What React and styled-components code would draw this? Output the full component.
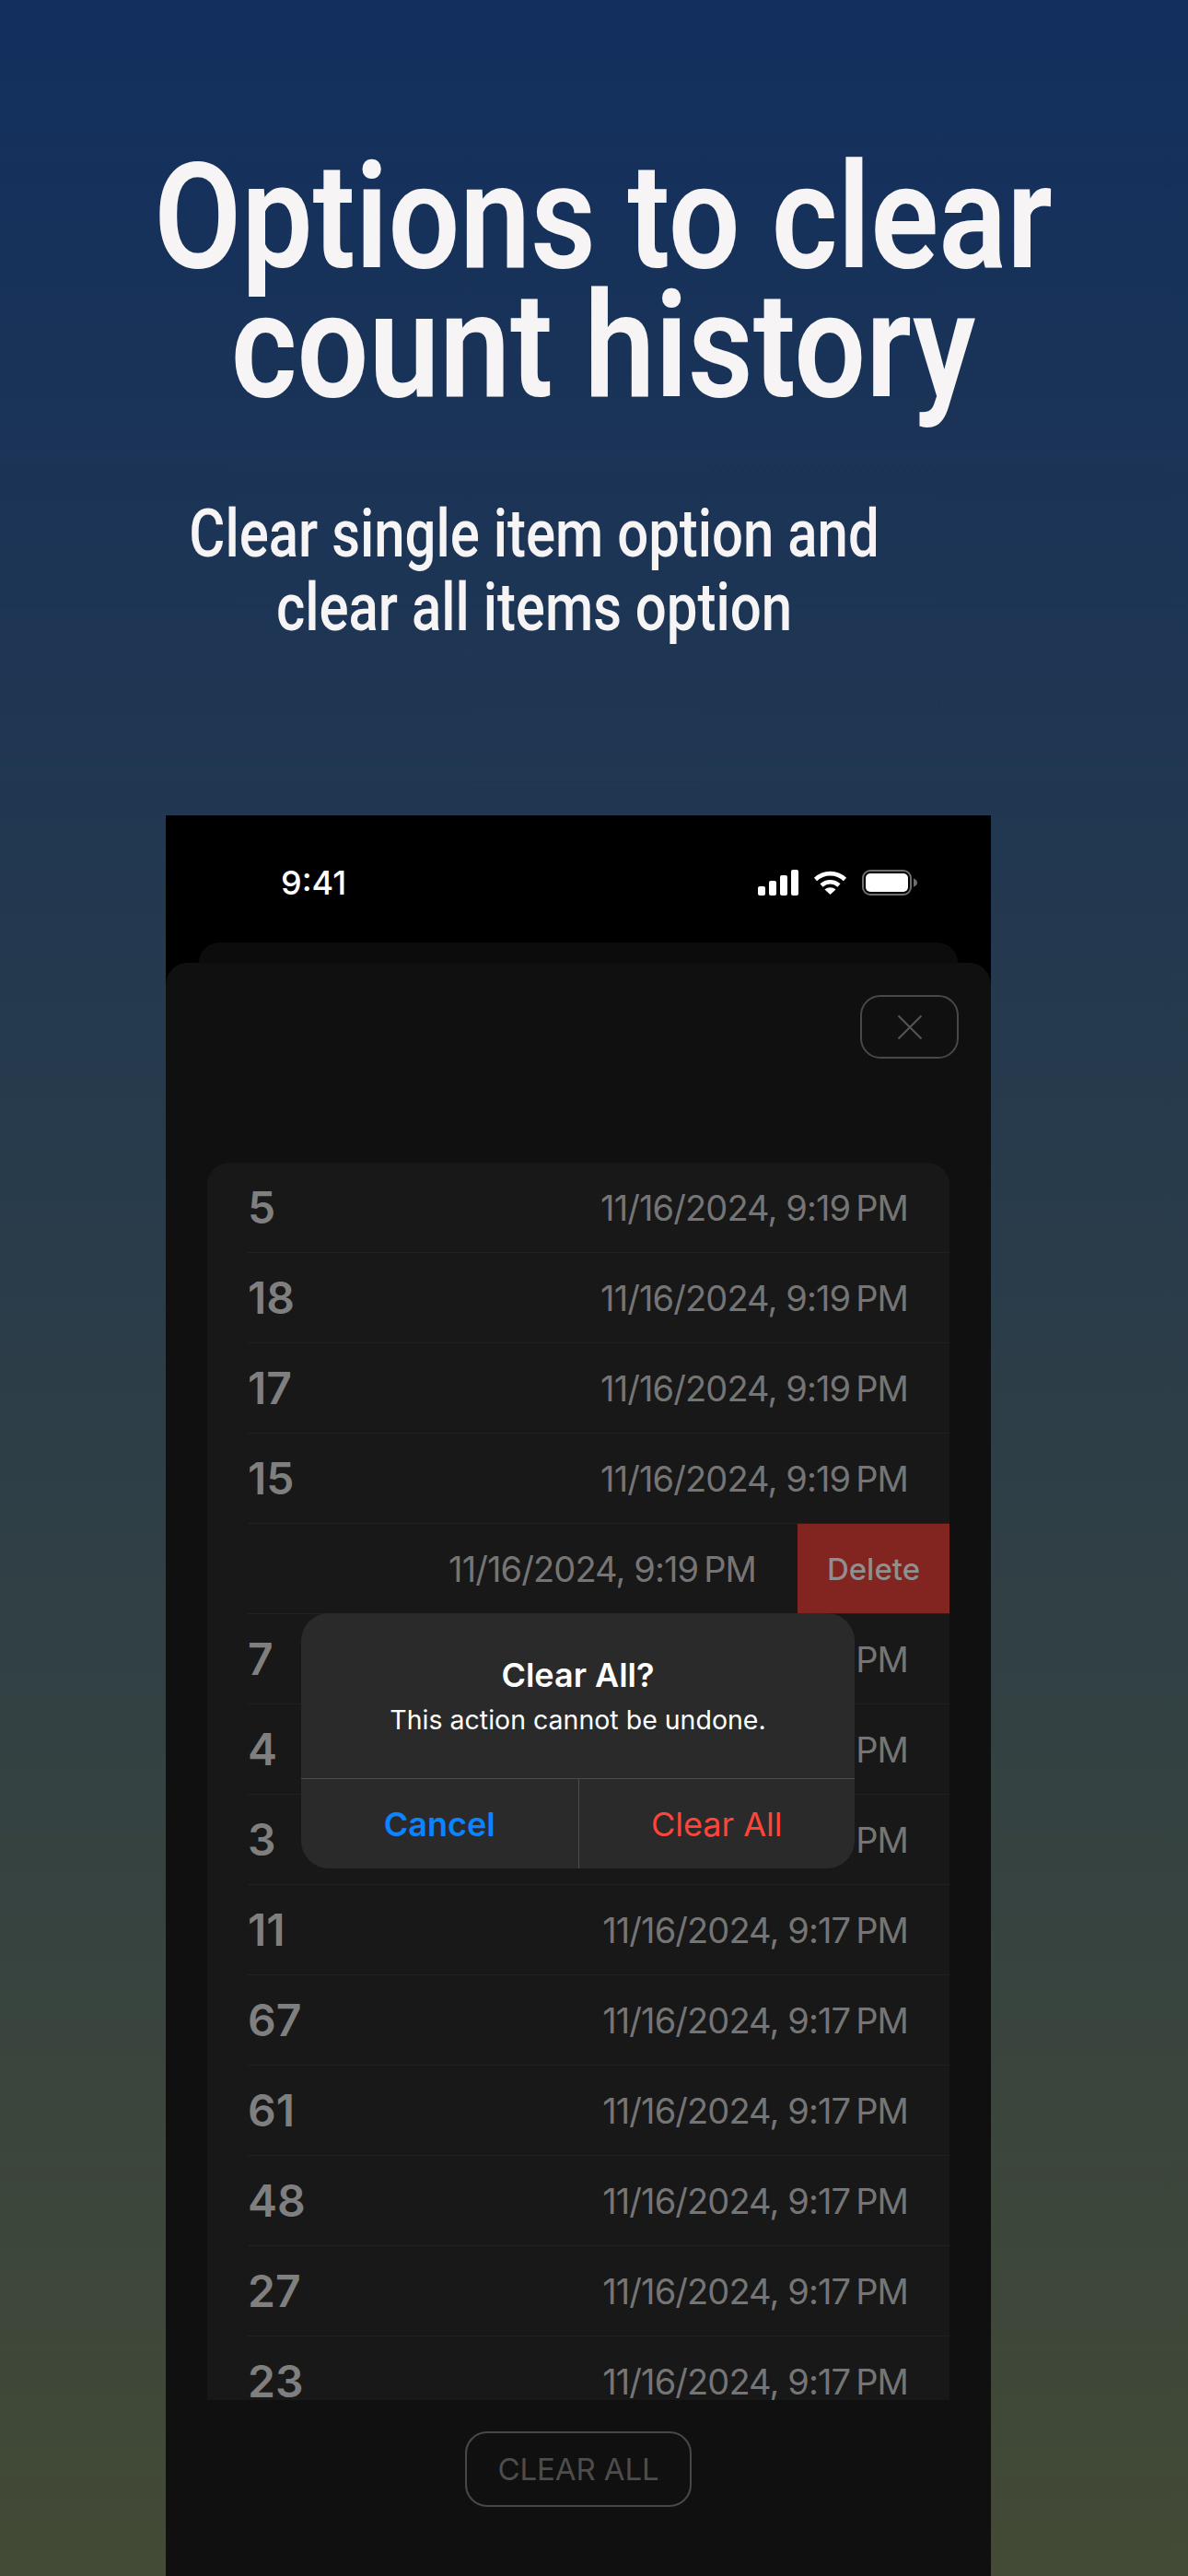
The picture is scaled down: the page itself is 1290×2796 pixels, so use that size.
import React from 'react';
import styled, { createGlobalStyle } from 'styled-components';

const GlobalStyle = createGlobalStyle`
	html, body {
		margin: 0;
		padding: 0;
		background: #122f5e;
	}
	* {
		box-sizing: border-box;
	}
`;

const Page = styled.div`
	display: flex;
	flex-direction: column;
	width: 1290px;
	height: 2796px;
	overflow: hidden;
	background: linear-gradient(180deg, #122f5e 0%, #434a35 100%);
	font-family: Inter, "Noto Sans", sans-serif;
`;

const Headline = styled.h1`
	margin: 166px 0 0;
	padding-left: 20px;
	font-family: Roboto, sans-serif;
	font-size: 160px;
	font-weight: 600;
	line-height: 140px;
	text-align: center;
	color: #f7f4f6;
	white-space: nowrap;
	transform: scaleX(0.86);
	transform-origin: 655px 0;
`;

const Subhead = styled.h2`
	margin: 94px 0 0;
	padding-right: 130px;
	font-family: Roboto, sans-serif;
	font-size: 72px;
	font-weight: 500;
	line-height: 80px;
	text-align: center;
	color: #f7f4f6;
	white-space: nowrap;
	transform: scaleX(0.832);
	transform-origin: 580px 0;
`;

const Phone = styled.div`
	position: relative;
	display: flex;
	flex-direction: column;
	flex: 1;
	width: 896px;
	margin: 185px 0 0 180px;
	overflow: hidden;
	background: #000;
`;

const StatusBar = styled.div`
	display: flex;
	align-items: center;
	justify-content: space-between;
	height: 138px;
	padding: 8px 80px 0 125px;
`;

const Clock = styled.span`
	font-size: 36px;
	font-weight: 500;
	color: #fff;
`;

const StatusIcons = styled.div`
	display: flex;
	align-items: center;
	gap: 16px;
`;

const BackCard = styled.div`
	height: 22px;
	margin: 0 36px;
	border-radius: 24px 24px 0 0;
	background: #0c0c0d;
`;

const Sheet = styled.div`
	display: flex;
	flex-direction: column;
	flex: 1;
	padding: 35px 0 0;
	border-radius: 24px 24px 0 0;
	background: #101010;
`;

const CloseButton = styled.div`
	display: flex;
	align-items: center;
	justify-content: center;
	align-self: flex-end;
	width: 107px;
	height: 69px;
	margin-right: 35px;
	border: 2px solid #484848;
	border-radius: 22px;
`;

const List = styled.div`
	height: 1343px;
	margin: 113px 45px 0;
	overflow: hidden;
	border-radius: 24px 24px 0 0;
	background: #181818;
`;

const Row = styled.div`
	display: flex;
	align-items: center;
	justify-content: ${p => (p.$swiped ? 'flex-end' : 'space-between')};
	height: 98px;
	margin-left: 44px;
	padding-right: ${p => (p.$swiped ? '0' : '45px')};
	border-bottom: 1px solid #212121;
`;

const Count = styled.span`
	font-size: 48px;
	font-weight: 600;
	color: #7f7f7f;
`;

const Stamp = styled.span`
	font-size: 38px;
	font-weight: 400;
	letter-spacing: -0.9px;
	color: #757575;
	margin-right: ${p => (p.$swiped ? '45px' : '0')};
`;

const DeleteAction = styled.div`
	display: flex;
	align-items: center;
	justify-content: center;
	align-self: stretch;
	width: 165px;
	background: #82241f;
	font-size: 33px;
	font-weight: 500;
	color: #8f8f8f;
`;

const ClearAllButton = styled.div`
	display: flex;
	align-items: center;
	justify-content: center;
	align-self: center;
	width: 246px;
	height: 82px;
	margin-top: 34px;
	border: 2px solid #484848;
	border-radius: 24px;
	font-size: 33px;
	letter-spacing: -0.1px;
	color: #4d4d4d;
`;

const Dialog = styled.div`
	position: absolute;
	top: 866px;
	left: 147px;
	display: flex;
	flex-direction: column;
	width: 601px;
	height: 277px;
	overflow: hidden;
	border-radius: 30px;
	background: #2a2a2b;
`;

const DialogBody = styled.div`
	display: flex;
	flex-direction: column;
	align-items: center;
	flex: 1;
	padding-top: 44px;
	color: #fff;
`;

const DialogTitle = styled.div`
	font-size: 36px;
	font-weight: 600;
	line-height: 46px;
`;

const DialogText = styled.div`
	margin-top: 4px;
	font-size: 28.5px;
	line-height: 44px;
`;

const DialogActions = styled.div`
	display: grid;
	grid-template-columns: 1fr 1fr;
	height: 98px;
	border-top: 1px solid #4c4c4d;
`;

const DialogAction = styled.div`
	display: flex;
	align-items: center;
	justify-content: center;
	font-size: 36px;
	font-weight: ${p => (p.$danger ? 400 : 600)};
	color: ${p => (p.$danger ? '#ff453a' : '#0a84ff')};
	border-left: ${p => (p.$danger ? '1px solid #4c4c4d' : 'none')};
`;

const SignalIcon = () => (
	<svg width="44" height="28" viewBox="0 0 44 28">
		<rect x="0" y="18" width="8" height="10" rx="2" fill="#fff" />
		<rect x="12" y="12" width="8" height="16" rx="2" fill="#fff" />
		<rect x="24" y="6" width="8" height="22" rx="2" fill="#fff" />
		<rect x="36" y="0" width="8" height="28" rx="2" fill="#fff" />
	</svg>
);

const WifiIcon = () => (
	<svg width="37" height="26" viewBox="0 0 37 26" fill="none">
		<path d="M2.5 9.5C11.5 1 25.5 1 34.5 9.5" stroke="#fff" strokeWidth="4.6" />
		<path d="M9 16C14.5 11 22.5 11 28 16" stroke="#fff" strokeWidth="4.6" />
		<path d="M18.5 26L12.5 20.5C16 17.6 21 17.6 24.5 20.5Z" fill="#fff" />
	</svg>
);

const BatteryIcon = () => (
	<svg width="60" height="28" viewBox="0 0 60 28" fill="none">
		<rect x="1" y="1" width="52" height="26" rx="8" stroke="#6e6e6e" strokeWidth="2" />
		<rect x="4" y="4" width="46" height="20" rx="5" fill="#fff" />
		<path d="M56 9.5C58.5 10.5 60 12 60 14C60 16 58.5 17.5 56 18.5Z" fill="#6e6e6e" />
	</svg>
);

const CloseIcon = () => (
	<svg width="28" height="28" viewBox="0 0 28 28" fill="none">
		<path d="M1.5 1.5L26.5 26.5M26.5 1.5L1.5 26.5" stroke="#555" strokeWidth="2" />
	</svg>
);

const at19 = '11/16/2024, 9:19\u202fPM';
const at17 = '11/16/2024, 9:17\u202fPM';

const rows = [
	{ count: 5, stamp: at19 },
	{ count: 18, stamp: at19 },
	{ count: 17, stamp: at19 },
	{ count: 15, stamp: at19 },
	{ swiped: true, stamp: at19 },
	{ count: 7, stamp: at19 },
	{ count: 4, stamp: at19 },
	{ count: 3, stamp: at19 },
	{ count: 11, stamp: at17 },
	{ count: 67, stamp: at17 },
	{ count: 61, stamp: at17 },
	{ count: 48, stamp: at17 },
	{ count: 27, stamp: at17 },
	{ count: 23, stamp: at17 },
];

const App = () => {
	return (
		<Page>
			<GlobalStyle />
			<Headline>Options to clear<br />count history</Headline>
			<Subhead>Clear single item option and<br />clear all items option</Subhead>
			<Phone>
				<StatusBar>
					<Clock>9:41</Clock>
					<StatusIcons>
						<SignalIcon />
						<WifiIcon />
						<BatteryIcon />
					</StatusIcons>
				</StatusBar>
				<BackCard />
				<Sheet>
					<CloseButton><CloseIcon /></CloseButton>
					<List>
						{rows.map((row, i) => (
							<Row key={i} $swiped={row.swiped}>
								{!row.swiped && <Count>{row.count}</Count>}
								<Stamp $swiped={row.swiped}>{row.stamp}</Stamp>
								{row.swiped && <DeleteAction>Delete</DeleteAction>}
							</Row>
						))}
					</List>
					<ClearAllButton>CLEAR ALL</ClearAllButton>
				</Sheet>
				<Dialog>
					<DialogBody>
						<DialogTitle>Clear All?</DialogTitle>
						<DialogText>This action cannot be undone.</DialogText>
					</DialogBody>
					<DialogActions>
						<DialogAction>Cancel</DialogAction>
						<DialogAction $danger>Clear All</DialogAction>
					</DialogActions>
				</Dialog>
			</Phone>
		</Page>
	);
};

export default App;
